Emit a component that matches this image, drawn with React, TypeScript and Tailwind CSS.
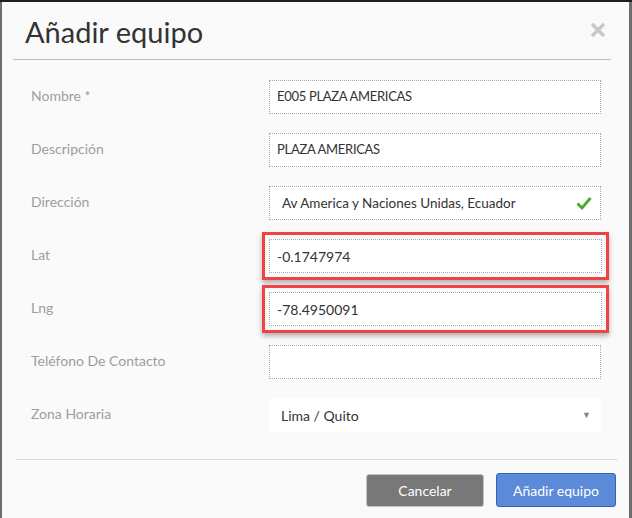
import React from "react";

const font = { fontFamily: '"Lato", "Liberation Sans", sans-serif' };

function Field({ label, children }: { label: string; children: React.ReactNode }) {
  return (
    <div className="flex items-center h-[34px]">
      <div className="w-[267px] pl-[29px] pb-[3px] text-[14px] text-[#a19d99]">{label}</div>
      <div className="w-[332px]">{children}</div>
    </div>
  );
}

function TextBox({ value, pl = "pl-[7px]", right, size = "text-[13.5px]" }: { value: string; pl?: string; right?: React.ReactNode; size?: string }) {
  return (
    <div className={`h-[34px] bg-white border border-dotted border-[#aaa] flex items-center ${pl} pr-[8px] ${size} text-[#333]`}>
      <span className="flex-1">{value}</span>
      {right}
    </div>
  );
}

function Highlight({ children }: { children: React.ReactNode }) {
  return (
    <div className="-ml-[7px] -mr-[8px] -my-[6px] p-[4px] border-[3px] border-[#f04343] shadow-[0_3px_5px_rgba(0,0,0,0.3)]">
      {children}
    </div>
  );
}

export default function App() {
  return (
    <div className="w-[632px] h-[518px] bg-[#6e6e6e] overflow-hidden" style={font}>
      <div className="h-[2px] bg-[#1e1e1e]" />
      <div className="ml-[2px] mr-[3px] h-[516px] bg-[#fafafa] flex flex-col">
        <div className="ml-[11px] mr-[18px] h-[58px] border-b border-[#bbb] flex items-center justify-between">
          <div className="pl-[12px] pt-[1px] text-[29px] text-[#333] leading-none">Añadir equipo</div>
          <svg width="16" height="16" viewBox="0 0 16 16" className="mr-[5px] -mt-[1px]">
            <path d="M2 2 L14 14 M14 2 L2 14" stroke="#c8c8c8" strokeWidth="3.4" strokeLinecap="butt" />
          </svg>
        </div>
        <div className="pt-[20px] flex flex-col gap-[19px]">
          <Field label="Nombre *"><TextBox value="E005 PLAZA AMERICAS" size="text-[13px] tracking-[-0.3px]" /></Field>
          <Field label="Descripción"><TextBox value="PLAZA AMERICAS" size="text-[13px] tracking-[-0.3px]" /></Field>
          <Field label="Dirección">
            <TextBox
              value="Av America y Naciones Unidas, Ecuador"
              pl="pl-[12px]"
              right={
                <svg width="16" height="14" viewBox="0 0 16 14">
                  <path d="M1.5 7.5 L6 12 L14.5 2" stroke="#4aa82a" strokeWidth="2.8" fill="none" />
                </svg>
              }
            />
          </Field>
          <Field label="Lat">
            <Highlight><TextBox value="-0.1747974" size="text-[14px]" /></Highlight>
          </Field>
          <Field label="Lng">
            <Highlight><TextBox value="-78.4950091" size="text-[14px]" /></Highlight>
          </Field>
          <Field label="Teléfono De Contacto"><TextBox value="" /></Field>
          <Field label="Zona Horaria">
            <div className="h-[34px] bg-white flex items-center pl-[12px] pr-[10px] text-[14px] text-[#333]">
              <span className="flex-1">Lima / Quito</span>
              <span className="text-[9px] text-[#888]">▼</span>
            </div>
          </Field>
        </div>
        <div className="mt-[27px] ml-[14px] mr-[11px] border-t border-[#ddd]" />
        <div className="flex justify-end gap-[12px] mr-[13px] mt-[14px]">
          <button className="w-[118px] h-[33px] rounded-[3px] bg-[#787878] border border-[#c4c4c4] text-white text-[14px]">Cancelar</button>
          <button className="w-[120px] h-[34px] -mt-[1px] rounded-[3px] bg-[#5b8ad9] border border-[#2f66b3] text-white text-[14px]">Añadir equipo</button>
        </div>
      </div>
    </div>
  );
}
